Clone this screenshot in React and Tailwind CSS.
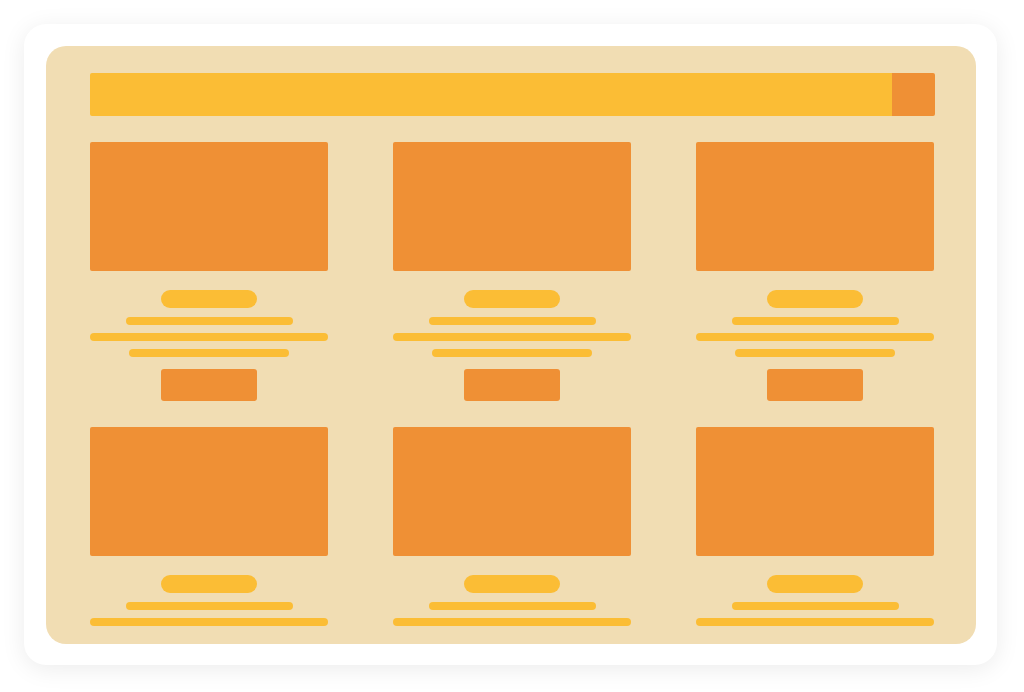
import React from "react";

const Card = () => (
  <div className="flex flex-col items-center">
    <div className="w-full h-[129px] bg-[#ef9035] rounded-[2px]" />
    <div className="mt-[19px] w-[96px] h-[18px] bg-[#fbbd35] rounded-full" />
    <div className="mt-[9px] w-[167px] h-[8px] bg-[#fbbd35] rounded-full" />
    <div className="mt-[8px] w-full h-[8px] bg-[#fbbd35] rounded-full" />
    <div className="mt-[8px] w-[160px] h-[8px] bg-[#fbbd35] rounded-full" />
    <div className="mt-[12px] w-[96px] h-[32px] bg-[#ef9035] rounded-[3px]" />
  </div>
);

const App = () => {
  const cards = [1, 2, 3, 4, 5, 6];
  return (
    <div className="w-[1024px] h-[692px] bg-white pt-[24px] pl-[24px]">
      <div className="w-[973px] h-[641px] bg-white rounded-[22px] shadow-[0_4px_24px_rgba(0,0,0,0.08)] p-[22px]">
        <div className="w-[930px] h-[598px] bg-[#f1ddb3] rounded-[20px] pt-[27px] pl-[44px]">
          <div className="w-[845px] h-[556px] overflow-hidden">
            <div className="flex h-[43px] rounded-[2px] overflow-hidden">
              <div className="flex-1 bg-[#fbbd35]" />
              <div className="w-[43px] bg-[#ef9035]" />
            </div>
            <div className="mt-[26px] grid grid-cols-[238px_238px_238px] gap-x-[65px] gap-y-[26px]">
              {cards.map((c) => (
                <Card key={c} />
              ))}
            </div>
          </div>
        </div>
      </div>
    </div>
  );
};

export default App;
